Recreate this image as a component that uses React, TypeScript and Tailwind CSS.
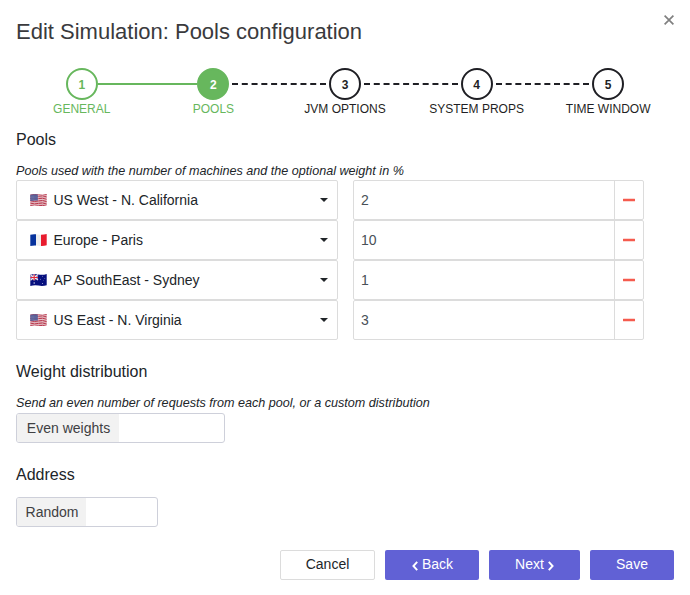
import React from "react";

type FlagName = "us" | "fr" | "au";

const pools: { flag: FlagName; name: string; count: string }[] = [
  { flag: "us", name: "US West - N. California", count: "2" },
  { flag: "fr", name: "Europe - Paris", count: "10" },
  { flag: "au", name: "AP SouthEast - Sydney", count: "1" },
  { flag: "us", name: "US East - N. Virginia", count: "3" },
];

const steps = ["GENERAL", "POOLS", "JVM OPTIONS", "SYSTEM PROPS", "TIME WINDOW"];

function Flag({ name }: { name: FlagName }) {
  if (name === "fr") {
    return (
      <svg className="h-3 w-[17px]" viewBox="0 0 17 12">
        <path d="M.3.7Q3 0 6 .3V11.5Q3 11.3.3 12Z" fill="#07329c" />
        <path d="M6 .3Q8.5.9 11 .7V11.9Q8.5 12 6 11.5Z" fill="#eee" />
        <path d="M11 .7Q14 .6 16.7 0V11.3Q14 12 11 11.9Z" fill="#e81c2e" />
      </svg>
    );
  }
  if (name === "au") {
    return (
      <svg className="h-3 w-[17px]" viewBox="0 0 17 12">
        <path d="M.3.7Q4.5-.4 8.5.5T16.7 0V11.3Q12.5 12.4 8.5 11.6T.3 12Z" fill="#07107e" />
        <path d="M.5.8 8 6M8 .5.5 6.3" stroke="#f2dfe6" strokeWidth="1.2" />
        <path d="M4.2.4V6.3M.3 3.5H8" stroke="#fff" strokeWidth="2" />
        <path d="M4.2.4V6.3M.3 3.5H8" stroke="#e2283b" strokeWidth="1.2" />
        <g fill="#c4c5e4">
          <circle cx="4.2" cy="9" r=".8" />
          <circle cx="12.5" cy="2.3" r=".45" />
          <circle cx="10.6" cy="5.3" r=".45" />
          <circle cx="14.8" cy="4.6" r=".45" />
          <circle cx="12.5" cy="9.6" r=".5" />
          <circle cx="13.4" cy="6.3" r=".3" />
        </g>
      </svg>
    );
  }
  return (
    <svg className="h-3 w-[17px]" viewBox="0 0 17 12">
      <path d="M.3.7Q4.5-.4 8.5.5T16.7 0V11.3Q12.5 12.4 8.5 11.6T.3 12Z" fill="#efe3e5" />
      <g fill="none" stroke="#b8354b" strokeWidth="1">
        <path d="M.3 1.1Q4.5 0 8.5.9T16.7.5" />
        <path d="M.3 2.9Q4.5 1.8 8.5 2.7T16.7 2.2" />
        <path d="M.3 4.6Q4.5 3.5 8.5 4.4T16.7 3.9" />
        <path d="M.3 6.4Q4.5 5.3 8.5 6.2T16.7 5.7" />
        <path d="M.3 8.1Q4.5 7 8.5 7.9T16.7 7.4" />
        <path d="M.3 9.8Q4.5 8.7 8.5 9.6T16.7 9.1" />
        <path d="M.3 11.5Q4.5 10.4 8.5 11.3T16.7 10.8" />
      </g>
      <path d="M.3.7Q4-.2 7.8.4V6.6Q4 6.1.3 7.1Z" fill="#555a94" />
      <path d="M1 2.2H7.3M1 3.7H7.3M1 5.2H7.3" stroke="#a3a4c6" strokeWidth=".5" strokeDasharray=".6 .6" />
    </svg>
  );
}

function Stepper() {
  return (
    <ol className="mt-[21px] grid grid-cols-5 text-xs leading-[18px]">
      {steps.map((label, i) => (
        <li key={label} className={"relative flex flex-col items-center " + (i < 2 ? "text-[#67b75d]" : "text-[#1f1f24]")}>
          {i === 1 && <span className="absolute top-[15px] right-1/2 mr-4 h-[2px] w-[99.6px] bg-[#67b75d]" />}
          {i > 1 && <span className="absolute top-[15px] right-1/2 mr-[19px] w-[93.6px] border-t-2 border-dashed border-[#1f1f24]" />}
          <span className={"flex size-8 items-center justify-center rounded-full border-2 pt-px font-bold " + (i === 1 ? "border-[#67b75d] bg-[#67b75d] text-white" : "border-current")}>
            {i + 1}
          </span>
          <span className="whitespace-nowrap">{label}</span>
        </li>
      ))}
    </ol>
  );
}

function Chevron({ d }: { d: string }) {
  return (
    <svg className="mt-[3px] h-[10px] w-[6px]" viewBox="0 0 6 10" fill="none" stroke="currentColor" strokeWidth="1.9">
      <path d={d} />
    </svg>
  );
}

export default function App() {
  const primary = "flex h-[30px] items-center justify-center rounded-[2px] bg-[#6161d5] pb-[2px] text-white";
  return (
    <div className="relative h-[595px] w-[690px] overflow-hidden bg-white px-4 pt-4 font-['Liberation_Sans',Arial,sans-serif] text-sm text-[#212529]">
      <button aria-label="Close" className="absolute top-[15px] right-4 text-[#808080]">
        <svg className="size-[10px]" viewBox="0 0 10 10" stroke="currentColor" strokeWidth="1.7">
          <path d="M.6.6 9.4 9.4M9.4.6.6 9.4" />
        </svg>
      </button>
      <h1 className="h-[31px] text-[22px] leading-[31px] text-[#3a3a3d]">Edit Simulation: Pools configuration</h1>
      <Stepper />

      <h2 className="mt-3 h-5 text-base leading-5">Pools</h2>
      <p className="mt-3 h-[18px] text-[12.6px] leading-[18px] italic">
        Pools used with the number of machines and the optional weight in %
      </p>
      <div className="flex w-[628px] flex-col">
        {pools.map((pool) => (
          <div key={pool.name} className="flex h-10 gap-[15px]">
            <button className="flex w-[322px] items-center rounded-[2px] border border-[#dcdcdc] pr-[9px] pl-[13px]">
              <Flag name={pool.flag} />
              <span className="ml-[6.5px] flex-1 text-left">{pool.name}</span>
              <span className="border-x-4 border-t-4 border-x-transparent border-t-[#212529]" />
            </button>
            <div className="flex w-[291px] rounded-[2px] border border-[#dcdcdc] text-[#495057]">
              <span className="flex flex-1 items-center pl-[7px]">{pool.count}</span>
              <button aria-label="Remove pool" className="flex w-[29px] items-center justify-center border-l border-[#dcdcdc]">
                <svg className="h-1 w-3" viewBox="0 0 12 4">
                  <rect y=".7" width="12" height="2.6" rx=".4" fill="#f55b4e" />
                </svg>
              </button>
            </div>
          </div>
        ))}
      </div>

      <h2 className="mt-[22px] h-5 text-base leading-5">Weight distribution</h2>
      <p className="mt-3 h-[18px] text-[12.6px] leading-[18px] italic">
        Send an even number of requests from each pool, or a custom distribution
      </p>
      <div className="mt-px flex h-[30px] w-[209px] overflow-hidden rounded-[3px] border border-[#ced0da] leading-7 text-[#404042]">
        <span className="w-[102px] bg-[#f2f2f2] pl-px text-center">Even weights</span>
      </div>

      <h2 className="mt-[22px] h-5 text-base leading-5">Address</h2>
      <div className="mt-3 flex h-[30px] w-[142px] overflow-hidden rounded-[3px] border border-[#ced0da] leading-7 text-[#404042]">
        <span className="w-[69px] bg-[#f2f2f2] pl-px text-center">Random</span>
      </div>

      <div className="mt-[23px] flex justify-end gap-[10px]">
        <button className="flex h-[30px] w-[95px] items-center justify-center rounded-[2px] border border-[#dcdcdc] pb-[2px]">Cancel</button>
        <button className={primary + " w-[94px] gap-1 pl-px"}><Chevron d="M5.2.8 1.4 5 5.2 9.2" />Back</button>
        <button className={primary + " w-[91px] gap-1"}>Next<Chevron d="M.8.8 4.6 5 .8 9.2" /></button>
        <button className={primary + " w-[84px]"}>Save</button>
      </div>
    </div>
  );
}
